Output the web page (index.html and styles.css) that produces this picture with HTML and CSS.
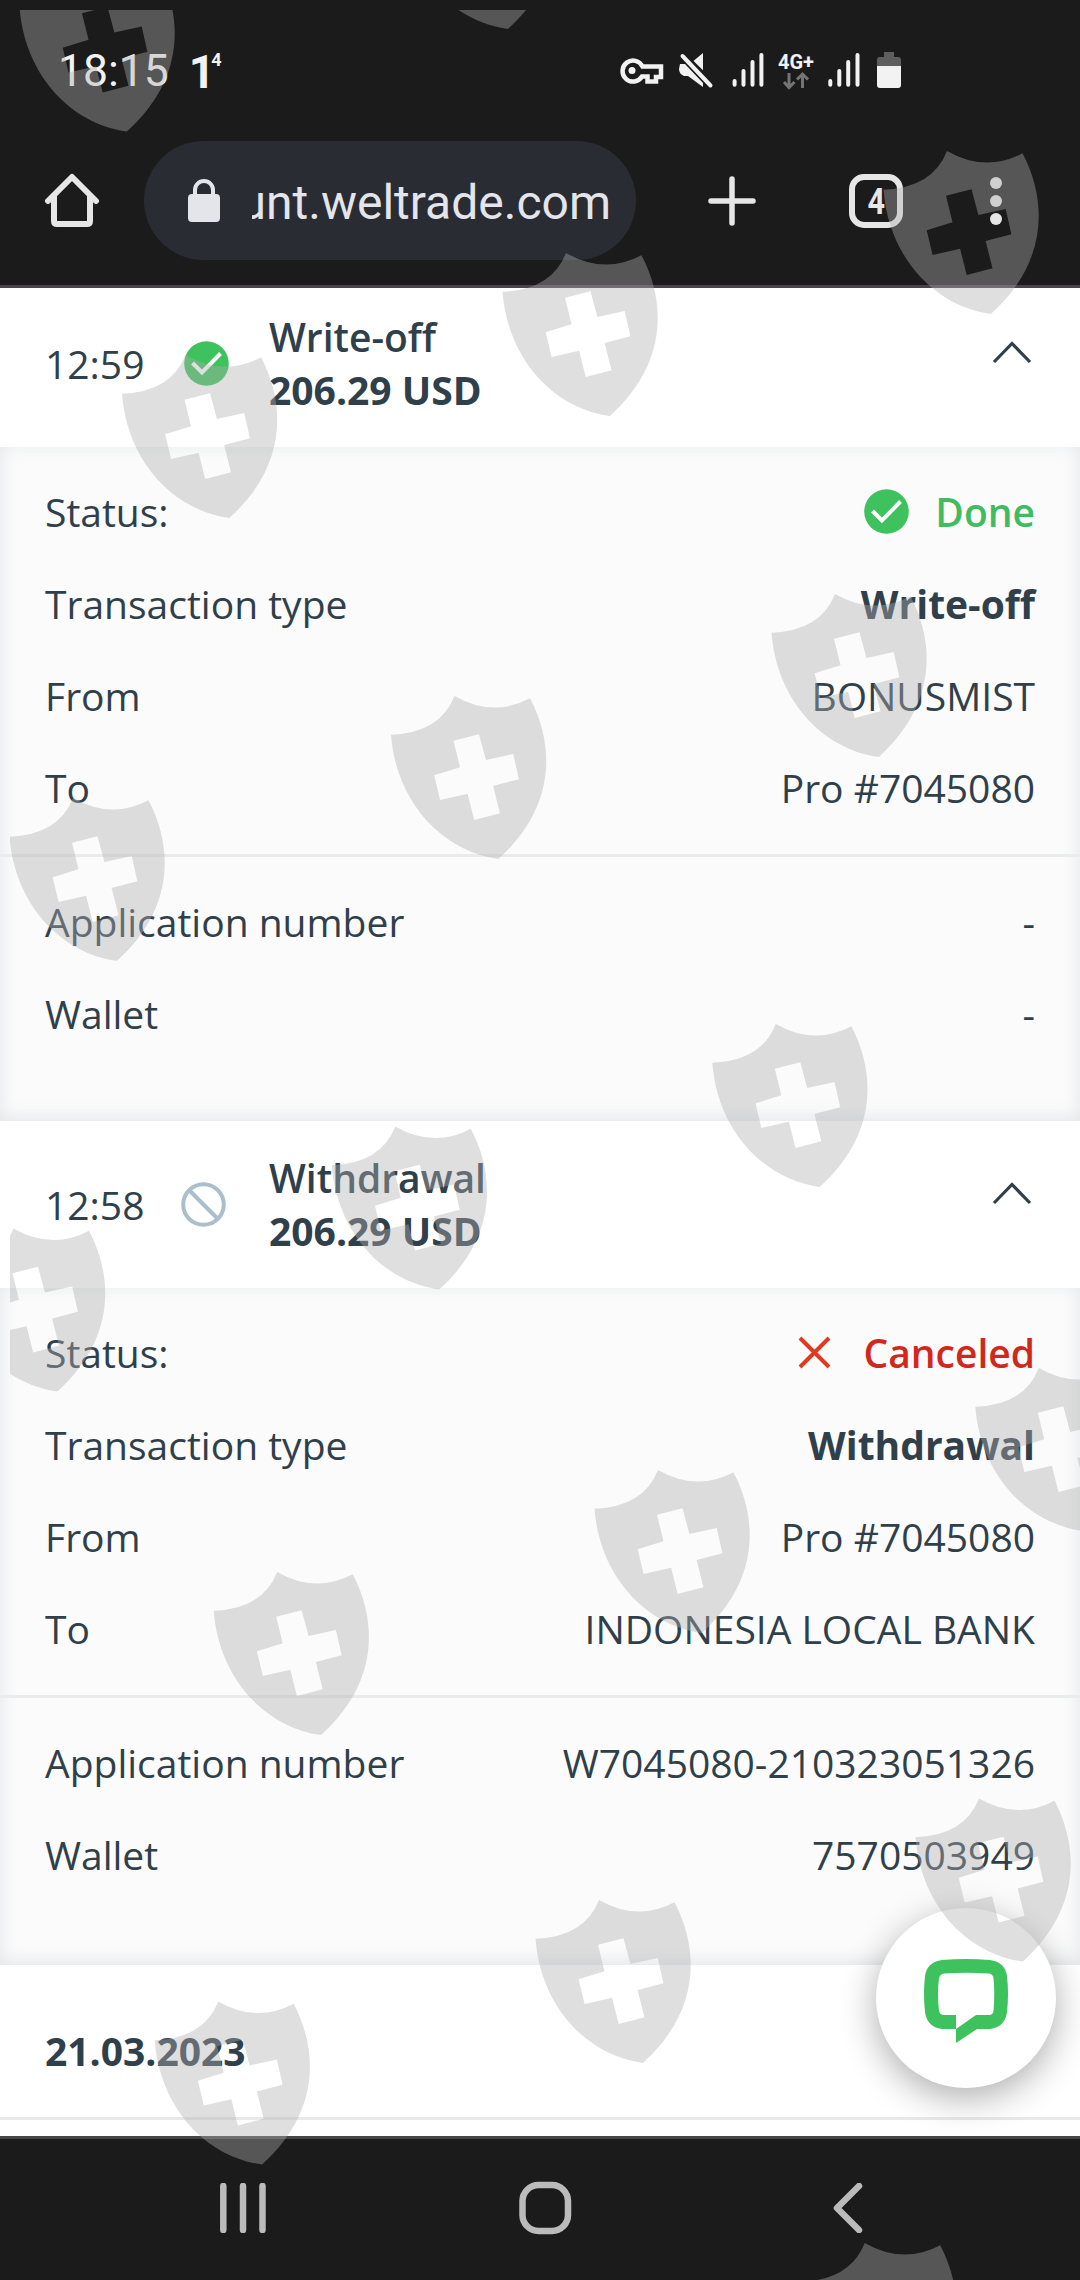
FILE: index.html
```
<!DOCTYPE html>
<html lang="en">

<head>
    <meta charset="UTF-8">
    <meta name="viewport" content="width=device-width, initial-scale=1.0">
    <title>Transaction history</title>
    <link rel="stylesheet" href="styles.css">
</head>

<body>
    <div class="screen">

        <!-- Status bar -->
        <div class="status-bar">
            <span class="clock">18:15</span>
            <span class="notice">1<sup>4</sup></span>
            <svg class="status-icons" width="290" height="44" viewBox="616 50 290 44">
                <g fill="none" stroke="#f2f2f2" stroke-width="4.5">
                    <path d="M642.5 67.5H661V78H656V82.500H647.500V77.500H642A10.500 10.500 0 1 1 642.500 67.500Z" />
                </g>
                <circle cx="632" cy="71.500" r="3.500" fill="#f2f2f2" />
                <path d="M691 64L703 54V74ZM680 65H685L703 84V88L688 77H684Q679 75 679 70Z" fill="#f2f2f2" />
                <path d="M683.500 55L713.500 84.500" stroke="#1b1b1b" stroke-width="4" />
                <path d="M682.500 57L710.500 86.500" stroke="#f2f2f2" stroke-width="4" stroke-linecap="round" />
                <path d="M734.600 82V85.700M743.500 72V85.700M752.500 63V85.700M761.400 56V85.700M830.300 82V85.700M839.300 72V85.700M848.200 63V85.700M857.500 56V85.700" stroke="#f2f2f2" stroke-width="4" stroke-linecap="round" />
                <text class="network" x="778" y="70" textLength="36" lengthAdjust="spacingAndGlyphs">4G+</text>
                <path d="M789 74V88M784 83L789 88.500L794.500 83M802.500 89V75.500M797 80.500L802.500 75L808 80.500" fill="none" stroke="#747474" stroke-width="3" />
                <path d="M884 58V53H894V58H898Q901 58 901 61V67H877V61Q877 58 880 58Z" fill="#5e5e5e" />
                <path d="M877 67H901V86Q901 89 898 89H880Q877 89 877 86Z" fill="#f2f2f2" />
            </svg>
        </div>

        <!-- Browser toolbar -->
        <div class="toolbar">
            <svg class="home" width="56" height="56" viewBox="0 0 56 56">
                <path d="M4 28L28 4L52 28M10 23V48Q10 51 13 51H43Q46 51 46 48V23" />
            </svg>
            <div class="url-bar">
                <svg width="34" height="44" viewBox="0 0 34 44">
                    <path d="M8 18V11A9 9 0 0 1 26 11V18" fill="none" stroke="#e3e5ea" stroke-width="4" />
                    <rect x="1" y="15" width="32" height="28" rx="4" fill="#e3e5ea" />
                </svg>
                <div class="url"><span>unt.weltrade.com</span></div>
            </div>
            <svg class="plus" width="48" height="50" viewBox="0 0 48 50">
                <path d="M24 3V47M3 25H45" />
            </svg>
            <div class="tabs"><span>4</span></div>
            <svg class="dots" width="12" height="50" viewBox="0 0 12 50">
                <circle cx="6" cy="7" r="6" />
                <circle cx="6" cy="25" r="6" />
                <circle cx="6" cy="43" r="6" />
            </svg>
        </div>

        <!-- Page content -->
        <div class="page">
            <div class="operation">
                <div class="time">12:59</div>
                <svg class="state" width="45" height="45" viewBox="0 0 45 45">
                    <circle cx="22.500" cy="22.500" r="22.300" fill="#3ec25d" />
                    <path d="M8.500 22L18 31.500L36.500 12.500" fill="none" stroke="#fff" stroke-width="4" />
                </svg>
                <div class="summary">
                    <div class="name">Write-off</div>
                    <div class="amount">206.29 USD</div>
                </div>
                <svg class="chevron" width="40" height="24" viewBox="0 0 40 24">
                    <path d="M2 22L20 3.500L38 22" />
                </svg>
            </div>
            <div class="details">
                <div class="group">
                    <div class="row">
                        <span>Status:</span>
                        <span class="status done">
                            <svg width="45" height="45" viewBox="0 0 45 45">
                                <circle cx="22.500" cy="22.500" r="22.300" fill="#3ec25d" />
                                <path d="M8.500 22L18 31.500L36.500 12.500" fill="none" stroke="#fff" stroke-width="4" />
                            </svg>
                            Done
                        </span>
                    </div>
                    <div class="row"><span>Transaction type</span><b>Write-off</b></div>
                    <div class="row"><span>From</span><span>BONUSMIST</span></div>
                    <div class="row"><span>To</span><span>Pro #7045080</span></div>
                </div>
                <div class="group">
                    <div class="row"><span>Application number</span><span>-</span></div>
                    <div class="row"><span>Wallet</span><span>-</span></div>
                </div>
            </div>

            <div class="operation">
                <div class="time">12:58</div>
                <svg class="state banned" width="45" height="45" viewBox="0 0 45 45">
                    <circle cx="22.500" cy="22.500" r="20.300" />
                    <path d="M8 8L37 37" />
                </svg>
                <div class="summary">
                    <div class="name">Withdrawal</div>
                    <div class="amount">206.29 USD</div>
                </div>
                <svg class="chevron" width="40" height="24" viewBox="0 0 40 24">
                    <path d="M2 22L20 3.500L38 22" />
                </svg>
            </div>
            <div class="details last">
                <div class="group">
                    <div class="row">
                        <span>Status:</span>
                        <span class="status canceled">
                            <svg width="45" height="45" viewBox="0 0 45 45">
                                <path d="M8 8L37 37M37 8L8 37" stroke="#e2391f" stroke-width="4" />
                            </svg>
                            Canceled
                        </span>
                    </div>
                    <div class="row"><span>Transaction type</span><b>Withdrawal</b></div>
                    <div class="row"><span>From</span><span>Pro #7045080</span></div>
                    <div class="row"><span>To</span><span>INDONESIA LOCAL BANK</span></div>
                </div>
                <div class="group">
                    <div class="row"><span>Application number</span><span>W7045080-210323051326</span></div>
                    <div class="row"><span>Wallet</span><span>7570503949</span></div>
                </div>
            </div>

            <div class="date">21.03.2023</div>
        </div>

        <!-- Navigation bar -->
        <div class="nav-bar">
            <svg width="46" height="50" viewBox="0 0 46 50">
                <path d="M3.300 3V47M23 3V47M42.500 3V47" />
            </svg>
            <svg class="nav-home" width="54" height="54" viewBox="0 0 54 54">
                <rect x="3.500" y="4" width="45.500" height="46" rx="16" />
            </svg>
            <svg width="30" height="50" viewBox="0 0 30 50">
                <path d="M26 3L4 25L26 47" />
            </svg>
        </div>

        <!-- Chat button -->
        <div class="chat">
            <svg width="84" height="84" viewBox="0 0 84 84">
                <path fill="#3ec25d" fill-rule="evenodd" d="M18 1Q42 -1 66 1Q81 3 83 17Q85 35 83 53Q81 68 66 70H53L32 84V70H18Q3 68 1 53Q-1 35 1 17Q3 3 18 1ZM32 70V56H20Q16 56 15 52Q13 35 15 19Q16 15 20 14.500Q42 13 65 14.500Q69 15 69.500 19Q71 35 69.500 52Q69 56 65 56H52Z" />
            </svg>
        </div>

        <!-- Shield watermark -->
        <svg class="watermark" width="1080" height="2280" viewBox="0 0 1080 2280">
            <defs>
                <clipPath id="area">
                    <rect x="10" y="10" width="1070" height="2270" />
                </clipPath>
                <path id="shield" fill-rule="evenodd" d="M0 38.700Q49 37 63.500 0Q102 22 139 2.300C166.500 55 161 115 107.300 163C50 155 5 105 0 38.700ZM62.500 44.700L88 38.300L94.900 64L122.200 58L127.900 83.200L102.100 90L109 117.300L83.200 124L76.600 97.700L49.100 104L43.200 79.300L69 71.300Z" />
            </defs>
            <g clip-path="url(#area)">
                <use href="#shield" x="19.500" y="-31.500" />
                <use href="#shield" x="400.500" y="-134" />
                <use href="#shield" x="883.500" y="151" />
                <use href="#shield" x="502.500" y="253" />
                <use href="#shield" x="122" y="355" />
                <use href="#shield" x="771.500" y="594" />
                <use href="#shield" x="391" y="696" />
                <use href="#shield" x="9.500" y="798" />
                <use href="#shield" x="712.300" y="1024" />
                <use href="#shield" x="331.800" y="1126.500" />
                <use href="#shield" x="-50" y="1228.500" />
                <use href="#shield" x="975.300" y="1368" />
                <use href="#shield" x="594.500" y="1470" />
                <use href="#shield" x="213.700" y="1572" />
                <use href="#shield" x="915.500" y="1798.500" />
                <use href="#shield" x="535.500" y="1900" />
                <use href="#shield" x="154.700" y="2001.500" />
                <use href="#shield" x="801.200" y="2243" />
            </g>
        </svg>

    </div>
</body>

</html>
```

FILE: styles.css
```
* {
    box-sizing: border-box;
}

body {
    margin: 0;
    font-family: "Open Sans", "Noto Sans", sans-serif;
    font-size: 39px;
    color: #2f404a;
    background-color: #fff;
}

svg {
    display: block;
    flex-shrink: 0;
}

.screen {
    position: relative;
    display: flex;
    flex-direction: column;
    width: 1080px;
    height: 2280px;
    overflow: hidden;
}

/* Status bar */

.status-bar {
    display: flex;
    align-items: center;
    height: 141px;
    padding: 0 174px 0 58px;
    background-color: #1b1b1b;
    color: #f2f2f2;
    font-family: Roboto, sans-serif;
}

.clock {
    font-size: 44.5px;
}

.notice {
    display: flex;
    align-items: flex-start;
    margin-left: 20px;
    padding-top: 3px;
    font-size: 46px;
    font-weight: 700;
    line-height: 50px;
}

.notice sup {
    margin-left: -4px;
    font-size: 18px;
    font-weight: 700;
    line-height: 26px;
}

.status-icons {
    margin-left: auto;
}

.network {
    fill: #f2f2f2;
    font-size: 20px;
    font-weight: 700;
}

/* Browser toolbar */

.toolbar {
    display: flex;
    align-items: flex-start;
    height: 147px;
    padding: 0 78px 0 44px;
    background-color: #1b1b1b;
    border-bottom: 3px solid #47444a;
    font-family: Roboto, sans-serif;
}

.home {
    margin-top: 32px;
    fill: none;
    stroke: #e6e6e6;
    stroke-width: 6;
    stroke-linecap: round;
    stroke-linejoin: round;
}

.url-bar {
    display: flex;
    align-items: center;
    width: 492px;
    height: 119px;
    margin-left: 44px;
    padding: 0 25px 0 43px;
    border-radius: 60px;
    background-color: #292c33;
    color: #e3e5ea;
}

.url {
    display: flex;
    justify-content: flex-end;
    flex: 1;
    width: 0;
    margin-left: 31px;
    padding-top: 4px;
    overflow: hidden;
    white-space: nowrap;
    font-size: 48px;
}

.plus {
    margin: 35px 0 0 72px;
    stroke: #e6e6e6;
    stroke-width: 5.5;
    stroke-linecap: round;
}

.tabs {
    display: flex;
    align-items: center;
    justify-content: center;
    width: 54px;
    height: 54px;
    margin: 33px 0 0 93px;
    border: 6px solid #e6e6e6;
    border-radius: 15px;
    color: #e6e6e6;
    font-size: 36px;
    font-weight: 700;
}

.tabs span {
    padding-top: 2px;
    transform: scaleX(0.85);
}

.dots {
    margin: 35px 0 0 auto;
    fill: #e6e6e6;
}

/* Page content */

.page {
    height: 1848px;
    overflow: hidden;
}

.operation {
    display: flex;
    align-items: center;
    height: 167px;
    padding: 0 48px 0 45px;
}

/* first one is scrolled a bit under the toolbar */
.operation:first-child {
    margin-top: -8px;
}

.time {
    width: 139px;
}

.summary {
    margin: 0 0 2px 40px;
    line-height: 53px;
}

.name {
    font-weight: 600;
}

.amount {
    font-weight: 700;
}

.banned {
    margin: 0 3px 0 -3px;
    fill: none;
    stroke: #abbecd;
    stroke-width: 4;
}

.chevron {
    margin: 0 0 23px auto;
    fill: none;
    stroke: #2f404a;
    stroke-width: 3.2;
}

.details {
    height: 674px;
    background-color: #fbfbfb;
    box-shadow: inset 0 -3px 18px rgba(40, 75, 90, 0.12);
}

.details.last {
    height: 677px;
}

.group {
    padding: 18px 45px;
}

.group:first-child {
    padding-bottom: 21px;
}

.group + .group {
    border-top: 3px solid #e9ebec;
}

.row {
    display: flex;
    align-items: center;
    justify-content: space-between;
    height: 92px;
}

.status {
    display: flex;
    align-items: center;
    gap: 26px;
    font-weight: 600;
}

.done {
    color: #3fbc5f;
}

.canceled {
    color: #d0281b;
}

.date {
    height: 155px;
    padding-left: 45px;
    border-bottom: 3px solid #e9e9e9;
    font-weight: 700;
    line-height: 171px;
}

/* Navigation bar */

.nav-bar {
    display: flex;
    align-items: center;
    height: 144px;
    padding: 0 217px 4px 220px;
    justify-content: space-between;
    background-color: #1b1b1b;
    border-top: 3px solid #464646;
    fill: none;
    stroke: #bbb;
    stroke-width: 6.5;
    stroke-linecap: round;
    stroke-linejoin: round;
}

.nav-home {
    margin-right: 8px;
}

/* Chat button */

.chat {
    position: absolute;
    right: 24px;
    bottom: 192px;
    display: flex;
    align-items: center;
    justify-content: center;
    width: 180px;
    height: 180px;
    padding-top: 6px;
    border-radius: 50%;
    background-color: #fff;
    box-shadow: 0 10px 36px rgba(0, 0, 0, 0.32);
}

.watermark {
    position: absolute;
    top: 0;
    left: 0;
    fill: rgba(175, 175, 175, 0.4);
    pointer-events: none;
}
```
